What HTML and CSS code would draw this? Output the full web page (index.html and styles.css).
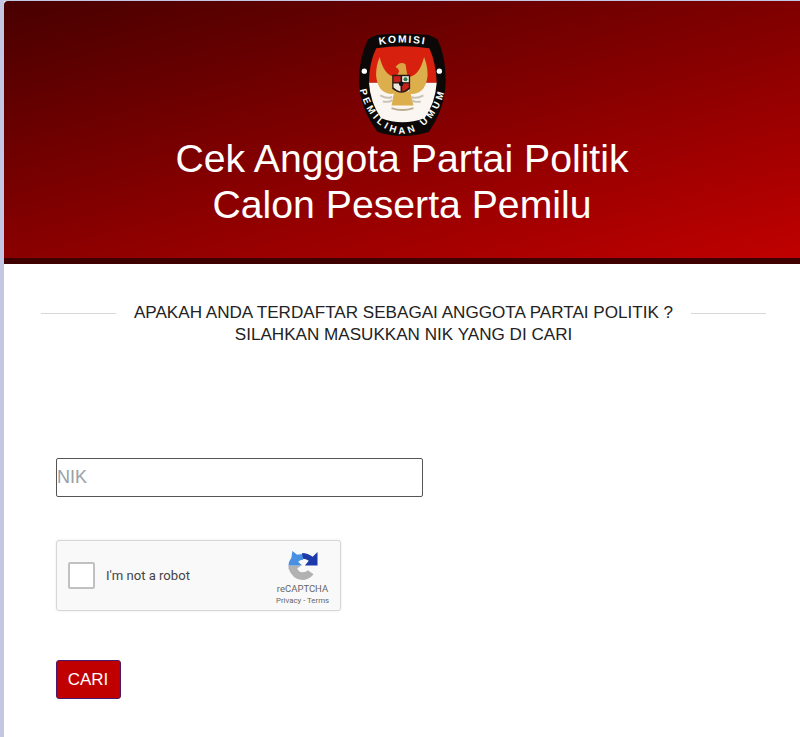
FILE: index.html
```html
<!DOCTYPE html>
<html lang="en">
<head>
  <meta charset="UTF-8" />
  <meta name="viewport" content="width=device-width, initial-scale=1.0"/>
  <title>Cek Anggota Partai Politik</title>
  <link rel="stylesheet" href="styles.css">
</head>
<body>
  <div class="page">
    <header class="banner">
      <svg class="kpu-logo" viewBox="60 40 262 310" role="img" aria-label="Logo KPU">
        <path d="M112 46 Q190 38 270 46 L296 58 Q322 110 321 190 Q318 270 270 338 Q190 362 116 338 Q64 270 60 190 Q60 110 88 58 Z" fill="#0c0808"/>
        <path d="M112 86 Q190 74 272 86 Q292 130 294 190 L90 190 Q90 130 112 86 Z" fill="#d8200f"/>
        <path d="M90 190 L294 190 Q290 250 258 296 Q190 322 126 296 Q94 250 90 190 Z" fill="#fbf6f2"/>
        <circle cx="76" cy="155" r="8" fill="#fff"/>
        <circle cx="302" cy="155" r="8" fill="#fff"/>
        <defs>
          <path id="arcTop" d="M100 80 Q190 58 282 80"/>
          <path id="arcBottom" d="M62 205 C76 285 130 342 190 344 C250 342 304 285 320 205"/>
        </defs>
        <text class="logo-text"><textPath href="#arcTop" startOffset="50%" text-anchor="middle">KOMISI</textPath></text>
        <text class="logo-text logo-small"><textPath href="#arcBottom" startOffset="50%" text-anchor="middle">PEMILIHAN UMUM</textPath></text>
        <!-- garuda -->
        <path d="M165 172 Q135 165 122 112 Q100 170 124 207 Q142 228 168 222 Z" fill="#dcae4c"/>
        <path d="M213 172 Q243 165 256 112 Q278 170 254 207 Q236 228 210 222 Z" fill="#dcae4c"/>
        <path d="M170 142 Q184 124 200 134 L206 170 L172 170 Q190 152 170 142 Z" fill="#d9a441"/>
        <path d="M166 215 L214 215 L224 258 L158 258 Z" fill="#dcae4c"/>
        <path d="M124 228 Q146 240 160 232 M254 228 Q232 240 218 232 M132 246 Q150 250 160 242 M246 246 Q228 250 218 242" stroke="#c9c2b4" stroke-width="6" fill="none"/>
        <path d="M158 266 Q190 278 224 266" stroke="#b9ad90" stroke-width="6" fill="none"/>
        <path d="M160 166 L214 166 L214 208 Q188 232 160 208 Z" fill="#2a1a14"/>
        <path d="M164 170 L185 170 L185 188 L164 188 Z" fill="#c8201a"/>
        <path d="M190 170 L210 170 L210 188 L190 188 Z" fill="#eee9df"/>
        <path d="M164 192 L185 192 L185 216 Q172 212 164 204 Z" fill="#eee9df"/>
        <path d="M190 192 L210 192 L210 204 Q202 212 190 216 Z" fill="#c8201a"/>
        <circle cx="200" cy="179" r="6" fill="#2c7a4a"/>
        <circle cx="187" cy="193" r="7" fill="#111"/>
      </svg>
      <h1>Cek Anggota Partai Politik<br>Calon Peserta Pemilu</h1>
    </header>

    <div class="intro">
      <span class="intro-line"></span>
      <p>APAKAH ANDA TERDAFTAR SEBAGAI ANGGOTA PARTAI POLITIK ?<br>SILAHKAN MASUKKAN NIK YANG DI CARI</p>
      <span class="intro-line"></span>
    </div>

    <form class="search-form">
      <input class="nik-input" type="text" placeholder="NIK">

      <div class="captcha">
        <span class="captcha-check"></span>
        <span class="captcha-label">I'm not a robot</span>
        <div class="captcha-brand">
          <svg class="captcha-icon" viewBox="0 0 30 30" aria-hidden="true">
            <path d="M0 15 L13 15 L9 18 Q11 22 15 22 Q18 22 20 20 L26 24 Q21 30 14 30 Q4 29 0 18 Z" fill="#b2b2b2"/>
            <path d="M4 0 L9 4 Q12 3 15 3 L15 9 Q12 9 10 11 L14 15 L0 15 Q0 11 3 7 Z" fill="#4a90e2"/>
            <path d="M14 2 Q20 2 25 6 L30 1 L30 15 L17 15 L21 10 Q18 8 15 8 Z" fill="#1c3aa9"/>
          </svg>
          <span class="captcha-name">reCAPTCHA</span>
          <span class="captcha-links">Privacy - Terms</span>
        </div>
      </div>

      <button class="btn-cari" type="button">CARI</button>
    </form>
  </div>
</body>
</html>
```

FILE: styles.css
```css
body {
  margin: 0;
  padding: 1px 0 0 4px;
  background-color: #c4c7e4;
  font-family: "Liberation Sans", Arial, sans-serif;
}

.page {
  background: #fff;
  height: 736px;
  overflow: hidden;
}

.banner {
  height: 256px;
  border-bottom: 6px solid #3f0000;
  border-top-left-radius: 4px;
  background: linear-gradient(165deg, #480000 0%, #8a0000 55%, #c00000 100%);
  text-align: center;
  padding-top: 1px;
}

.kpu-logo {
  display: block;
  width: 87px;
  height: 103px;
  margin: 31px auto 0;
}

.logo-text {
  font-family: "Liberation Sans", Arial, sans-serif;
  font-weight: bold;
  font-size: 31px;
  letter-spacing: 5px;
  fill: #fff;
}

.logo-small {
  font-size: 29px;
  letter-spacing: 10px;
}

h1 {
  margin: 0;
  font-weight: normal;
  font-size: 39.200px;
  line-height: 46px;
  color: #fff;
}

.intro {
  display: flex;
  margin: 38px 34px 0 37px;
  gap: 18px;
}

.intro p {
  margin: 0;
  font-size: 17.100px;
  line-height: 22px;
  text-align: center;
  color: #222;
}

.intro-line {
  flex: 1;
  height: 1px;
  margin-top: 11px;
  background: #d8d8d8;
}

.search-form {
  padding: 112px 0 0 52px;
}

.nik-input {
  display: block;
  box-sizing: border-box;
  width: 367px;
  height: 39px;
  padding: 0;
  border: 1px solid #555;
  border-radius: 2px;
  outline: none;
  font-family: "Liberation Sans", Arial, sans-serif;
  font-size: 18px;
}

.nik-input::placeholder {
  color: #9aa0a6;
  opacity: 1;
}

.captcha {
  box-sizing: border-box;
  display: flex;
  align-items: center;
  width: 285px;
  height: 71px;
  margin-top: 43px;
  padding: 0 11px 0 11px;
  background: #f9f9f9;
  border: 1px solid #d6d6d6;
  border-radius: 3px;
  box-shadow: 0 0 3px rgba(0,0,0,0.08);
  font-family: Roboto, sans-serif;
}

.captcha-check {
  box-sizing: border-box;
  width: 27px;
  height: 27px;
  background: #fff;
  border: 2px solid #c1c1c1;
  border-radius: 2px;
}

.captcha-label {
  margin-left: 11px;
  font-size: 13.100px;
  color: #444;
}

.captcha-brand {
  display: flex;
  flex-direction: column;
  align-items: center;
  margin-left: auto;
  padding-top: 6px;
  color: #666;
}

.captcha-icon {
  width: 30px;
  height: 29px;
  margin-bottom: 3px;
}

.captcha-name {
  font-size: 9.500px;
  line-height: 12px;
}

.captcha-links {
  font-size: 7.800px;
  line-height: 12px;
}

.btn-cari {
  display: block;
  box-sizing: border-box;
  width: 65px;
  height: 39px;
  margin-top: 49px;
  padding: 0 1px 0 0;
  background-color: #c00000;
  color: #fff;
  font-family: "Liberation Sans", Arial, sans-serif;
  font-size: 17px;
  border: 1px solid #4a1a6a;
  border-radius: 3px;
  cursor: pointer;
}
```
